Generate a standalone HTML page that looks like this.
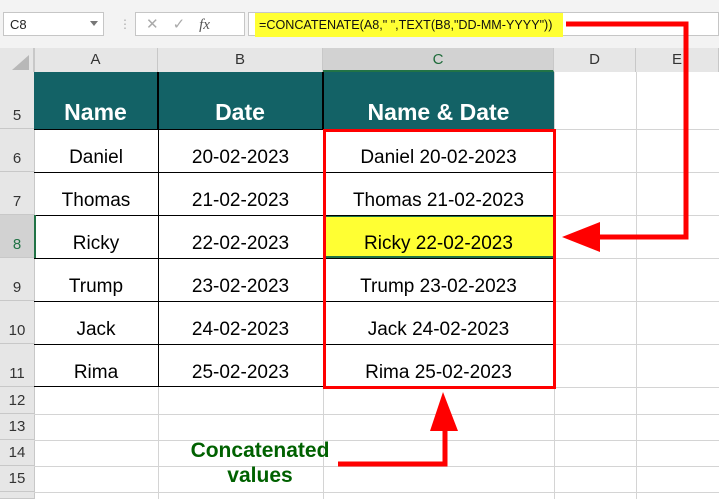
<!DOCTYPE html>
<html><head><style>
*{margin:0;padding:0;box-sizing:border-box}
body{width:719px;height:499px;background:#fff;position:relative;overflow:hidden;font-family:"Liberation Sans",sans-serif}
.a{position:absolute}
.cell{position:absolute;display:flex;align-items:flex-end;justify-content:center;padding-bottom:3px;font-size:19px;color:#000}
.rh{position:absolute;left:0;width:34px;background:#e6e6e6;color:#333;font-size:15px;display:flex;align-items:flex-end;justify-content:center;padding-bottom:4px;border-bottom:1px solid #c8c8c8}
.ch{position:absolute;top:48px;height:24px;background:#e6e6e6;color:#333;font-size:15px;text-align:center;line-height:24px;border-right:1px solid #c8c8c8}
.hl{position:absolute;left:34px;width:685px;height:1px;background:#d4d4d4}
.vl{position:absolute;top:72px;height:427px;width:1px;background:#d4d4d4}
</style></head><body>
<div class="a" style="left:0;top:0;width:719px;height:48px;background:#f3f3f3"></div>
<div class="a" style="left:3px;top:12px;width:101px;height:24px;background:#fff;border:1px solid #c6c6c6;font-size:13px;padding:4px 6px;color:#222">C8</div>
<div class="a" style="left:90px;top:21px;border-left:4px solid transparent;border-right:4px solid transparent;border-top:5px solid #777"></div>
<div class="a" style="left:119px;top:17px;color:#aaa;font-size:12px">⋮</div>
<div class="a" style="left:135px;top:12px;width:110px;height:24px;background:#fff;border:1px solid #c6c6c6;color:#aaa;font-size:15px;padding:2px 10px;letter-spacing:14px">✕✓<i style="font-family:'Liberation Serif';color:#555;letter-spacing:0">fx</i></div>
<div class="a" style="left:248px;top:12px;width:471px;height:24px;background:#fff;border:1px solid #c6c6c6"></div>
<div class="a" style="left:255px;top:13px;width:308px;height:24px;background:#ffff33;font-size:12.6px;line-height:24px;padding-left:4px;color:#111;white-space:nowrap">=CONCATENATE(A8," ",TEXT(B8,"DD-MM-YYYY"))</div>

<div class="a" style="left:0;top:48px;width:34px;height:24px;background:#e6e6e6;border-right:1px solid #c8c8c8"></div>
<div class="a" style="left:12px;top:55px;border-left:17px solid transparent;border-bottom:15px solid #b8b8b8"></div>
<div class="ch" style="left:34px;width:124px">A</div>
<div class="ch" style="left:158px;width:165px">B</div>
<div class="ch" style="left:323px;width:231px;background:#d2d2d2;color:#1e6b3a;border-bottom:2px solid #217346">C</div>
<div class="ch" style="left:554px;width:82px">D</div>
<div class="ch" style="left:636px;width:83px">E</div>

<div class="rh" style="top:72px;height:57px">5</div>
<div class="rh" style="top:129px;height:43px">6</div>
<div class="rh" style="top:172px;height:43px">7</div>
<div class="rh" style="top:215px;height:43px;background:#d2d2d2;color:#217346">8</div>
<div class="rh" style="top:258px;height:43px">9</div>
<div class="rh" style="top:301px;height:43px">10</div>
<div class="rh" style="top:344px;height:43px">11</div>
<div class="rh" style="top:387px;height:27px">12</div>
<div class="rh" style="top:414px;height:26px">13</div>
<div class="rh" style="top:440px;height:26px">14</div>
<div class="rh" style="top:466px;height:26px">15</div>
<div class="rh" style="top:492px;height:7px"></div>
<div class="a" style="left:34px;top:48px;width:1px;height:451px;background:#c8c8c8"></div>

<div class="vl" style="left:554px"></div><div class="vl" style="left:636px"></div>
<div class="vl" style="left:158px;top:387px;height:112px"></div><div class="vl" style="left:323px;top:387px;height:112px"></div>
<div class="hl" style="top:414px"></div><div class="hl" style="top:440px"></div><div class="hl" style="top:466px"></div><div class="hl" style="top:492px"></div>
<div class="hl" style="top:129px;left:554px;width:165px"></div><div class="hl" style="top:172px;left:554px;width:165px"></div><div class="hl" style="top:215px;left:554px;width:165px"></div><div class="hl" style="top:258px;left:554px;width:165px"></div><div class="hl" style="top:301px;left:554px;width:165px"></div><div class="hl" style="top:344px;left:554px;width:165px"></div><div class="hl" style="top:387px;left:554px;width:165px"></div>

<div class="a" style="left:34px;top:72px;width:520px;height:57px;background:#136266"></div>
<div class="cell" style="left:34px;top:72px;width:124px;height:57px;color:#fff;font-weight:bold;font-size:23px;border-right:1px solid #000">Name</div>
<div class="cell" style="left:158px;top:72px;width:165px;height:57px;color:#fff;font-weight:bold;font-size:23px;border-right:1px solid #000">Date</div>
<div class="cell" style="left:323px;top:72px;width:231px;height:57px;color:#fff;font-weight:bold;font-size:23px">Name &amp; Date</div>

<div class="a" style="left:324px;top:215px;width:230px;height:43px;background:#ffff33;border-top:2px solid #217346;border-bottom:2px solid #217346"></div>

<div class="a" style="left:34px;top:129px;width:520px;height:258px;border-top:1px solid #000;border-bottom:1px solid #000"></div>
<div class="a" style="left:34px;top:172px;width:520px;height:1px;background:#000"></div>
<div class="a" style="left:34px;top:215px;width:520px;height:1px;background:#000"></div>
<div class="a" style="left:34px;top:258px;width:520px;height:1px;background:#000"></div>
<div class="a" style="left:34px;top:301px;width:520px;height:1px;background:#000"></div>
<div class="a" style="left:34px;top:344px;width:520px;height:1px;background:#000"></div>
<div class="a" style="left:158px;top:72px;width:1px;height:315px;background:#000"></div>
<div class="a" style="left:323px;top:72px;width:1px;height:315px;background:#000"></div>
<div class="a" style="left:34px;top:215px;width:2px;height:43px;background:#217346"></div>

<div class="cell" style="left:34px;top:129px;width:124px;height:43px">Daniel</div>
<div class="cell" style="left:158px;top:129px;width:165px;height:43px">20-02-2023</div>
<div class="cell" style="left:323px;top:129px;width:231px;height:43px">Daniel 20-02-2023</div>
<div class="cell" style="left:34px;top:172px;width:124px;height:43px">Thomas</div>
<div class="cell" style="left:158px;top:172px;width:165px;height:43px">21-02-2023</div>
<div class="cell" style="left:323px;top:172px;width:231px;height:43px">Thomas 21-02-2023</div>
<div class="cell" style="left:34px;top:215px;width:124px;height:43px">Ricky</div>
<div class="cell" style="left:158px;top:215px;width:165px;height:43px">22-02-2023</div>
<div class="cell" style="left:323px;top:215px;width:231px;height:43px">Ricky 22-02-2023</div>
<div class="cell" style="left:34px;top:258px;width:124px;height:43px">Trump</div>
<div class="cell" style="left:158px;top:258px;width:165px;height:43px">23-02-2023</div>
<div class="cell" style="left:323px;top:258px;width:231px;height:43px">Trump 23-02-2023</div>
<div class="cell" style="left:34px;top:301px;width:124px;height:43px">Jack</div>
<div class="cell" style="left:158px;top:301px;width:165px;height:43px">24-02-2023</div>
<div class="cell" style="left:323px;top:301px;width:231px;height:43px">Jack 24-02-2023</div>
<div class="cell" style="left:34px;top:344px;width:124px;height:43px">Rima</div>
<div class="cell" style="left:158px;top:344px;width:165px;height:43px">25-02-2023</div>
<div class="cell" style="left:323px;top:344px;width:231px;height:43px">Rima 25-02-2023</div>

<div class="a" style="left:323px;top:129px;width:233px;height:260px;border:3px solid #ff0000"></div>

<div class="a" style="left:170px;top:438px;width:180px;text-align:center;font-weight:bold;font-size:21px;line-height:25px;color:#006100">Concatenated<br>values</div>

<svg class="a" style="left:0;top:0" width="719" height="499">
<polyline points="566,24 686,24 686,237 598,237" fill="none" stroke="#ff0000" stroke-width="5"/>
<polygon points="562,237 600,222 600,252" fill="#ff0000"/>
<polyline points="338,464 445,464 445,425" fill="none" stroke="#ff0000" stroke-width="5"/>
<polygon points="443,392 430,431 458,431" fill="#ff0000"/>
</svg>
</body></html>
